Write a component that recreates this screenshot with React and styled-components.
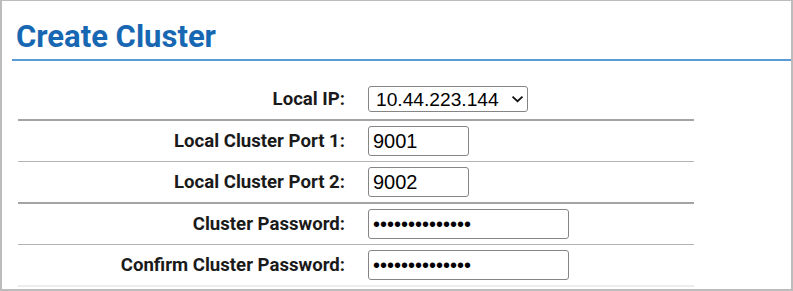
import React from "react";
import styled, { createGlobalStyle } from "styled-components";

const GlobalStyle = createGlobalStyle`
  html, body {
    margin: 0;
    padding: 0;
    background: #ffffff;
  }
  * {
    box-sizing: border-box;
  }
`;

const fields = [
  { label: "Local IP:", kind: "select", value: "10.44.223.144" },
  { label: "Local Cluster Port 1:", kind: "text", value: "9001", width: 101 },
  { label: "Local Cluster Port 2:", kind: "text", value: "9002", width: 101 },
  { label: "Cluster Password:", kind: "password", value: "clusterpass123", width: 201 },
  { label: "Confirm Cluster Password:", kind: "password", value: "clusterpass123", width: 201 },
];

function Chevron() {
  return (
    <ChevronIcon width="13" height="8" viewBox="0 0 13 8" aria-hidden="true">
      <path d="M1.5 1.6 L6.5 6.2 L11.5 1.6" fill="none" stroke="#111" strokeWidth="1.8" />
    </ChevronIcon>
  );
}

export default function App() {
  return (
    <>
      <GlobalStyle />
      <Frame>
        <Header>
          <Title>Create Cluster</Title>
        </Header>
        <FormTable>
          {fields.map((f, i) => (
            <Row key={f.label} $thick={i % 2 === 0} $last={i === fields.length - 1}>
              <Label>{f.label}</Label>
              <Value>
                {f.kind === "select" ? (
                  <SelectWrap>
                    <Select defaultValue={f.value}>
                      <option>{f.value}</option>
                    </Select>
                    <Chevron />
                  </SelectWrap>
                ) : (
                  <TextInput
                    type={f.kind}
                    defaultValue={f.value}
                    $width={f.width}
                  />
                )}
              </Value>
            </Row>
          ))}
        </FormTable>
      </Frame>
    </>
  );
}

const Frame = styled.div`
  width: 793px;
  height: 291px;
  border: 2px solid #bcbcbc;
  border-top-width: 1px;
  overflow: hidden;
  background: #ffffff;
`;

const Header = styled.div`
  margin-left: 10px;
  padding: 17px 0 4px 4px;
  border-bottom: 2px solid #5b9bd5;
`;

const Title = styled.h1`
  margin: 0;
  font-family: Roboto, "Liberation Sans", sans-serif;
  font-size: 31px;
  font-weight: 700;
  line-height: 37px;
  color: #1767b3;
`;

const FormTable = styled.div`
  width: 676px;
  margin: 18px 0 0 16px;
`;

const Row = styled.div`
  display: grid;
  grid-template-columns: 327px 1fr;
  column-gap: 23px;
  align-items: center;
  height: ${(p) => (p.$thick ? 42 : 41)}px;
  border-bottom: ${(p) =>
    p.$last ? "2px solid #ececec" : p.$thick ? "2px solid #a4a4a4" : "1px solid #b4b4b4"};
`;

const Label = styled.div`
  text-align: right;
  font-family: Roboto, "Liberation Sans", sans-serif;
  font-size: 18.6px;
  font-weight: 700;
  color: #1a1a1a;
`;

const Value = styled.div`
  display: flex;
  align-items: center;
`;

const TextInput = styled.input`
  width: ${(p) => p.$width}px;
  height: 30px;
  padding: 0 4px;
  border: 1px solid #858585;
  border-radius: 3px;
  font-family: "Liberation Sans", Arial, sans-serif;
  font-size: 20px;
  color: #000000;
  background: #ffffff;
  outline: none;
`;

const SelectWrap = styled.div`
  position: relative;
  width: 160px;
  height: 26px;
`;

const Select = styled.select`
  appearance: none;
  width: 100%;
  height: 100%;
  padding: 0 0 0 7px;
  border: 1px solid #858585;
  border-radius: 3px;
  font-family: "Liberation Sans", Arial, sans-serif;
  font-size: 19.2px;
  color: #000000;
  background: #ffffff;
  outline: none;
`;

const ChevronIcon = styled.svg`
  position: absolute;
  right: 4px;
  top: 9px;
  pointer-events: none;
`;
